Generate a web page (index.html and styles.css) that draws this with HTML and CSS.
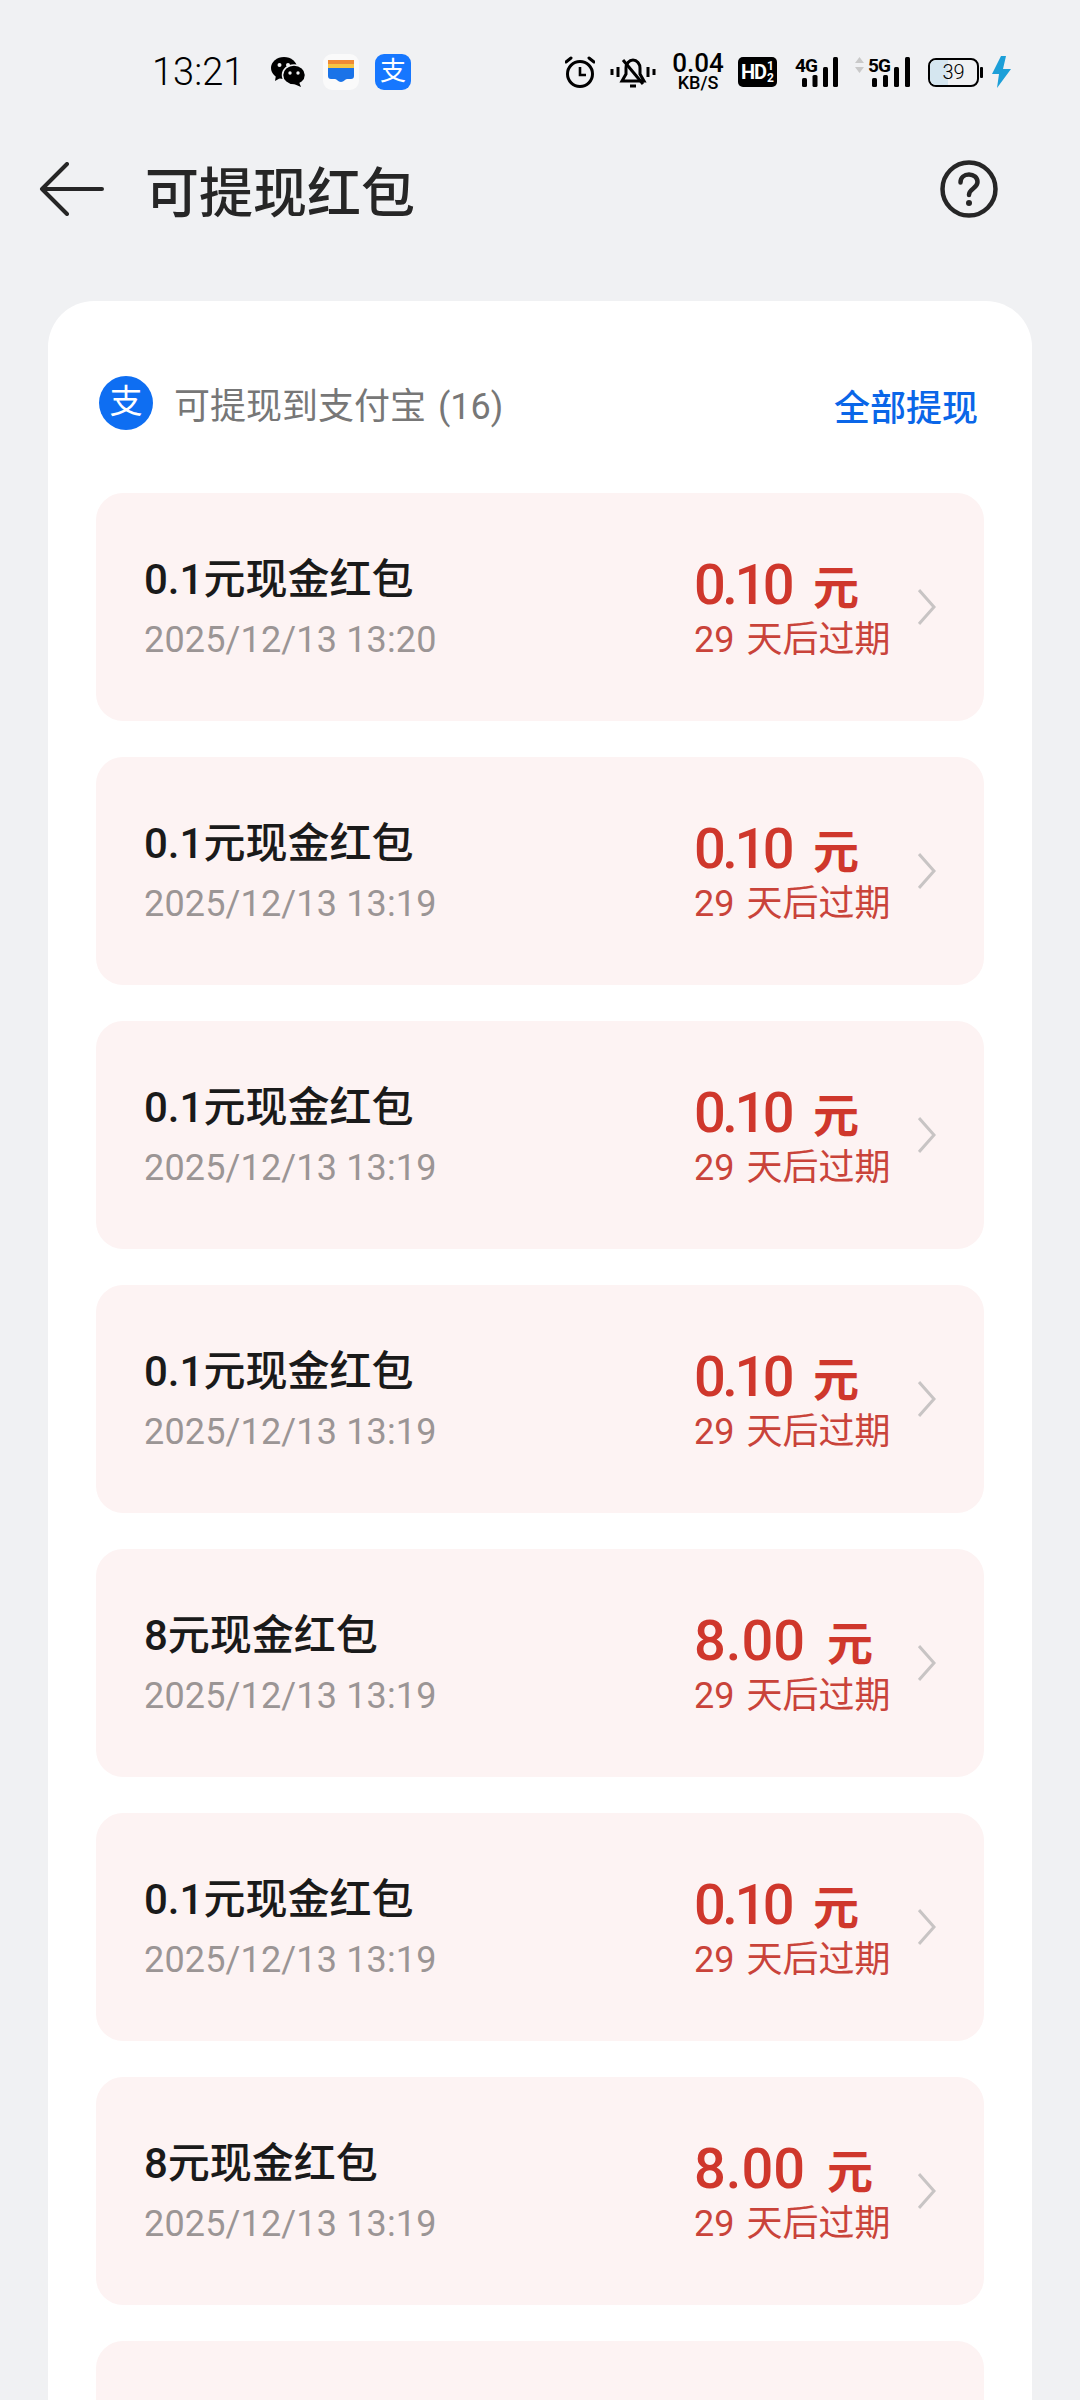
FILE: index.html
```html
<!DOCTYPE html>
<html lang="zh-CN">
<head>
    <meta charset="UTF-8">
    <meta name="viewport" content="width=device-width, initial-scale=1.0">
    <title>可提现红包</title>
    <link rel="stylesheet" href="styles.css">
</head>
<body>
    <div class="status-bar">
        <div class="status-left">
            <span class="clock">13:21</span>
            <svg class="ic-wechat" width="34" height="30" viewBox="0 0 34 30">
                <ellipse cx="13" cy="11" rx="13" ry="11" fill="#000"/>
                <path d="M5 18l-1 6 7-4z" fill="#000"/>
                <ellipse cx="23" cy="18" rx="11.5" ry="10" fill="#000" stroke="#f0f1f3" stroke-width="1.5"/>
                <path d="M28 25l2 5-7-3z" fill="#000"/>
                <circle cx="8.5" cy="8" r="2" fill="#f0f1f3"/>
                <circle cx="17" cy="8" r="2" fill="#f0f1f3"/>
                <circle cx="19" cy="16" r="1.7" fill="#f0f1f3"/>
                <circle cx="27" cy="16" r="1.7" fill="#f0f1f3"/>
            </svg>
            <svg class="ic-wallet" width="36" height="36" viewBox="0 0 36 36">
                <rect width="36" height="36" rx="9" fill="#fafafa"/>
                <rect x="5" y="6" width="26" height="5" fill="#f08a34"/>
                <rect x="5" y="10" width="26" height="4" fill="#f6c544"/>
                <path d="M5 14h26v8a3 3 0 0 1-3 3h-4c-2 0-3 3-6 3s-4-3-6-3H8a3 3 0 0 1-3-3z" fill="#1a73e8"/>
            </svg>
            <span class="ic-alipay">支</span>
        </div>
        <div class="status-right">
            <svg width="30" height="32" viewBox="0 0 30 32" fill="none" stroke="#000" stroke-width="3">
                <circle cx="15" cy="18" r="12.5"/>
                <path d="M15 11v8h6" stroke-width="2.6"/>
                <path d="M1 6l5-4M29 6l-5-4" stroke-linecap="round"/>
            </svg>
            <svg width="46" height="32" viewBox="0 0 46 32" fill="none" stroke="#000" stroke-width="3">
                <path d="M2 13v6M8 11v10M38 11v10M44 13v6"/>
                <path d="M12 25h22l-4-7v-6c0-4-3-8-7-8s-7 4-7 8v6z"/>
                <path d="M13 4l20 24"/>
                <path d="M20 30h6"/>
            </svg>
            <div class="net-speed">
                <span class="net-num">0.04</span>
                <span class="net-unit">KB/S</span>
            </div>
            <div class="hd-badge">
                <span class="hd-text">HD</span>
                <span class="hd-sim"><span>1</span><span>2</span></span>
            </div>
            <div class="signal signal-4g">
                <span class="signal-label">4G</span>
                <svg width="45" height="30" viewBox="0 0 45 30" fill="#000">
                    <rect x="7" y="21" width="5" height="9" rx="1.5"/>
                    <rect x="17.500" y="18" width="5" height="12" rx="1.5"/>
                    <rect x="28" y="10" width="5" height="20" rx="1.5"/>
                    <rect x="38" y="0" width="5" height="30" rx="1.5"/>
                </svg>
            </div>
            <div class="signal signal-5g">
                <svg class="updown" width="9" height="16" viewBox="0 0 9 16" fill="#c9c9c9">
                    <path d="M4.500 0L9 6H0zM4.500 16L0 10h9z"/>
                </svg>
                <span class="signal-label">5G</span>
                <svg width="45" height="30" viewBox="0 0 45 30" fill="#000">
                    <rect x="7" y="21" width="5" height="9" rx="1.5"/>
                    <rect x="18" y="18" width="5" height="12" rx="1.5"/>
                    <rect x="29" y="10" width="5" height="20" rx="1.5"/>
                    <rect x="40" y="0" width="5" height="30" rx="1.5"/>
                </svg>
            </div>
            <div class="battery">
                <div class="battery-body">
                    <div class="battery-fill"></div>
                    <span class="battery-num">39</span>
                </div>
                <div class="battery-cap"></div>
            </div>
            <svg class="bolt" width="19" height="32" viewBox="0 0 19 32" fill="#1c9fd8">
                <path d="M9 0L0 18h7L5 32l14-19h-8l3-13z"/>
            </svg>
        </div>
    </div>

    <div class="title-bar">
        <svg class="back" width="66" height="54" viewBox="0 0 66 54" fill="none" stroke="#262626" stroke-width="4" stroke-linecap="round" stroke-linejoin="round">
            <path d="M28 2L3 27l25 25M3 27h60"/>
        </svg>
        <h1 class="page-title">可提现红包</h1>
        <svg class="help" width="60" height="60" viewBox="0 0 60 60" fill="none" stroke="#262626">
            <circle cx="30" cy="30" r="26.500" stroke-width="4.500"/>
            <path d="M21.500 23.500c0-5 3.800-8 8.500-8s8.500 3 8.500 7.500c0 6.500-8.500 6.500-8.500 13" stroke-width="4.500" stroke-linecap="round"/>
            <circle cx="30" cy="44" r="3" fill="#262626" stroke="none"/>
        </svg>
    </div>

    <div class="card">
        <div class="card-head">
            <span class="alipay-dot">支</span>
            <span class="card-head-text">可提现到支付宝 (16)</span>
            <span class="withdraw-all">全部提现</span>
        </div>

        <div class="list">
            <div class="item">
                <div class="item-info">
                    <div class="item-name">0.1元现金红包</div>
                    <div class="item-date">2025/12/13 13:20</div>
                </div>
                <div class="item-money">
                    <div class="amount"><span class="num tight">0.10</span><span class="unit">元</span></div>
                    <div class="expire">29 天后过期</div>
                </div>
                <svg class="chevron" width="18" height="36" viewBox="0 0 18 36"><path d="M1 1l15 17L1 35"/></svg>
            </div>
            <div class="item">
                <div class="item-info">
                    <div class="item-name">0.1元现金红包</div>
                    <div class="item-date">2025/12/13 13:19</div>
                </div>
                <div class="item-money">
                    <div class="amount"><span class="num tight">0.10</span><span class="unit">元</span></div>
                    <div class="expire">29 天后过期</div>
                </div>
                <svg class="chevron" width="18" height="36" viewBox="0 0 18 36"><path d="M1 1l15 17L1 35"/></svg>
            </div>
            <div class="item">
                <div class="item-info">
                    <div class="item-name">0.1元现金红包</div>
                    <div class="item-date">2025/12/13 13:19</div>
                </div>
                <div class="item-money">
                    <div class="amount"><span class="num tight">0.10</span><span class="unit">元</span></div>
                    <div class="expire">29 天后过期</div>
                </div>
                <svg class="chevron" width="18" height="36" viewBox="0 0 18 36"><path d="M1 1l15 17L1 35"/></svg>
            </div>
            <div class="item">
                <div class="item-info">
                    <div class="item-name">0.1元现金红包</div>
                    <div class="item-date">2025/12/13 13:19</div>
                </div>
                <div class="item-money">
                    <div class="amount"><span class="num tight">0.10</span><span class="unit">元</span></div>
                    <div class="expire">29 天后过期</div>
                </div>
                <svg class="chevron" width="18" height="36" viewBox="0 0 18 36"><path d="M1 1l15 17L1 35"/></svg>
            </div>
            <div class="item">
                <div class="item-info">
                    <div class="item-name">8元现金红包</div>
                    <div class="item-date">2025/12/13 13:19</div>
                </div>
                <div class="item-money">
                    <div class="amount"><span class="num">8.00</span><span class="unit">元</span></div>
                    <div class="expire">29 天后过期</div>
                </div>
                <svg class="chevron" width="18" height="36" viewBox="0 0 18 36"><path d="M1 1l15 17L1 35"/></svg>
            </div>
            <div class="item">
                <div class="item-info">
                    <div class="item-name">0.1元现金红包</div>
                    <div class="item-date">2025/12/13 13:19</div>
                </div>
                <div class="item-money">
                    <div class="amount"><span class="num tight">0.10</span><span class="unit">元</span></div>
                    <div class="expire">29 天后过期</div>
                </div>
                <svg class="chevron" width="18" height="36" viewBox="0 0 18 36"><path d="M1 1l15 17L1 35"/></svg>
            </div>
            <div class="item">
                <div class="item-info">
                    <div class="item-name">8元现金红包</div>
                    <div class="item-date">2025/12/13 13:19</div>
                </div>
                <div class="item-money">
                    <div class="amount"><span class="num">8.00</span><span class="unit">元</span></div>
                    <div class="expire">29 天后过期</div>
                </div>
                <svg class="chevron" width="18" height="36" viewBox="0 0 18 36"><path d="M1 1l15 17L1 35"/></svg>
            </div>
            <!-- cut off by the bottom of the screen -->
            <div class="item"></div>
        </div>
    </div>
</body>
</html>
```

FILE: styles.css
```css
* {
    box-sizing: border-box;
}
html, body {
    margin: 0;
    height: 2400px;
    overflow: hidden;
}
body {
    background-color: #f0f1f3;
    font-family: Roboto, "Noto Sans CJK SC", sans-serif;
    color: #1a1a1a;
}

/* status bar */
.status-bar {
    height: 144px;
    display: flex;
    justify-content: space-between;
    align-items: center;
    padding: 0 69px 0 152px;
}
.status-left, .status-right {
    display: flex;
    align-items: center;
}
.clock {
    font-size: 38px;
    font-weight: 300;
    color: #000;
    width: 90px;
    margin-right: 29px;
}
.ic-wechat {
    margin-right: 18px;
}
.ic-wallet {
    margin-right: 16px;
}
.ic-alipay {
    width: 36px;
    height: 36px;
    border-radius: 9px;
    background-color: #1677ff;
    color: #fff;
    font-size: 26px;
    font-weight: 400;
    line-height: 35px;
    text-align: center;
}
.status-right > svg:nth-child(1) {
    margin-right: 15px;
}
.status-right > svg:nth-child(2) {
    margin-right: 16px;
}
.net-speed {
    width: 52px;
    margin-right: 14px;
    display: flex;
    flex-direction: column;
    align-items: center;
    color: #000;
}
.net-num {
    font-size: 26px;
    font-weight: 500;
    line-height: 22px;
}
.net-unit {
    font-size: 18px;
    font-weight: 500;
    line-height: 18px;
}
.hd-badge {
    width: 39px;
    height: 30px;
    margin-right: 18px;
    border-radius: 5px;
    background-color: #000;
    color: #fff;
    display: flex;
    align-items: center;
    justify-content: center;
    font-weight: 700;
}
.hd-text {
    font-size: 20px;
    letter-spacing: -1px;
}
.hd-sim {
    display: flex;
    flex-direction: column;
    font-size: 12px;
    line-height: 12px;
    margin-left: 1px;
}
.signal {
    position: relative;
    display: flex;
    align-items: flex-end;
    height: 30px;
}
.signal-4g {
    width: 45px;
    margin-right: 15px;
}
.signal-5g {
    width: 55px;
    margin-right: 18px;
    justify-content: flex-end;
}
.signal-label {
    position: absolute;
    top: -3px;
    left: 0;
    font-size: 19px;
    font-weight: 700;
    color: #000;
    letter-spacing: -1px;
}
.signal-5g .signal-label {
    left: 13px;
}
.updown {
    position: absolute;
    top: 0;
    left: 0;
}
.battery {
    display: flex;
    align-items: center;
    width: 55px;
    margin-right: 9px;
}
.battery-body {
    position: relative;
    width: 52px;
    height: 29px;
    border: 2.5px solid #000;
    border-radius: 8px;
    overflow: hidden;
}
.battery-fill {
    width: 39%;
    height: 100%;
    background-color: #d5e6f0;
}
.battery-num {
    position: absolute;
    top: 0;
    left: 0;
    right: 0;
    font-size: 20px;
    font-weight: 300;
    line-height: 24px;
    text-align: center;
    color: #000;
}
.battery-cap {
    width: 3px;
    height: 11px;
    margin-left: 1px;
    background-color: #000;
    border-radius: 1px;
}

/* title bar */
.title-bar {
    height: 90px;
    display: flex;
    align-items: center;
    padding: 0 81px 0 39px;
    margin-bottom: 67px;
}
.back {
    margin-right: 40px;
}
.page-title {
    margin: 0;
    flex-grow: 1;
    font-size: 54px;
    font-weight: 500;
    color: #262626;
}

/* card */
.card {
    margin: 0 48px;
    padding: 74px 48px 0;
    background-color: #fff;
    border-radius: 46px 46px 0 0;
    height: 2099px;
    overflow: hidden;
}
.card-head {
    height: 56px;
    display: flex;
    align-items: center;
    margin-bottom: 62px;
}
.alipay-dot {
    width: 54px;
    height: 54px;
    margin-left: 3px;
    margin-right: 21px;
    border-radius: 50%;
    background-color: #0e6ef2;
    color: #fff;
    font-size: 33px;
    font-weight: 400;
    line-height: 52px;
    text-align: center;
}
.card-head-text {
    flex-grow: 1;
    font-size: 36px;
    word-spacing: 3px;
    color: #777;
}
.withdraw-all {
    font-size: 36px;
    font-weight: 500;
    color: #0a66e8;
    margin-right: 6px;
    padding-top: 4px;
}

/* red packet list */
.list {
    display: flex;
    flex-direction: column;
    gap: 36px;
}
.item {
    height: 228px;
    flex-shrink: 0;
    display: flex;
    align-items: center;
    padding: 0 48px;
    background-color: #fdf3f3;
    border-radius: 27px;
}
.item-info {
    flex-grow: 1;
    padding-top: 4px;
}
.item-name {
    font-size: 42px;
    font-weight: 500;
    line-height: 62px;
    color: #1a1a1a;
}
.item-date {
    font-size: 36px;
    line-height: 58px;
    letter-spacing: 0.150px;
    color: #9b9595;
}
.item-money {
    width: 224px;
    flex-shrink: 0;
    padding-top: 3px;
    color: #cf372c;
}
.amount {
    display: flex;
    align-items: baseline;
    line-height: 60px;
}
.num {
    font-size: 56px;
    font-weight: 500;
}
.num.tight {
    letter-spacing: -3.500px;
}
.unit {
    font-size: 46px;
    font-weight: 700;
    margin-left: 22px;
}
.expire {
    font-size: 36px;
    line-height: 45px;
    word-spacing: 3px;
    color: #c9433a;
}
.chevron {
    flex-shrink: 0;
    fill: none;
    stroke: #c8c4c4;
    stroke-width: 3;
}
```
